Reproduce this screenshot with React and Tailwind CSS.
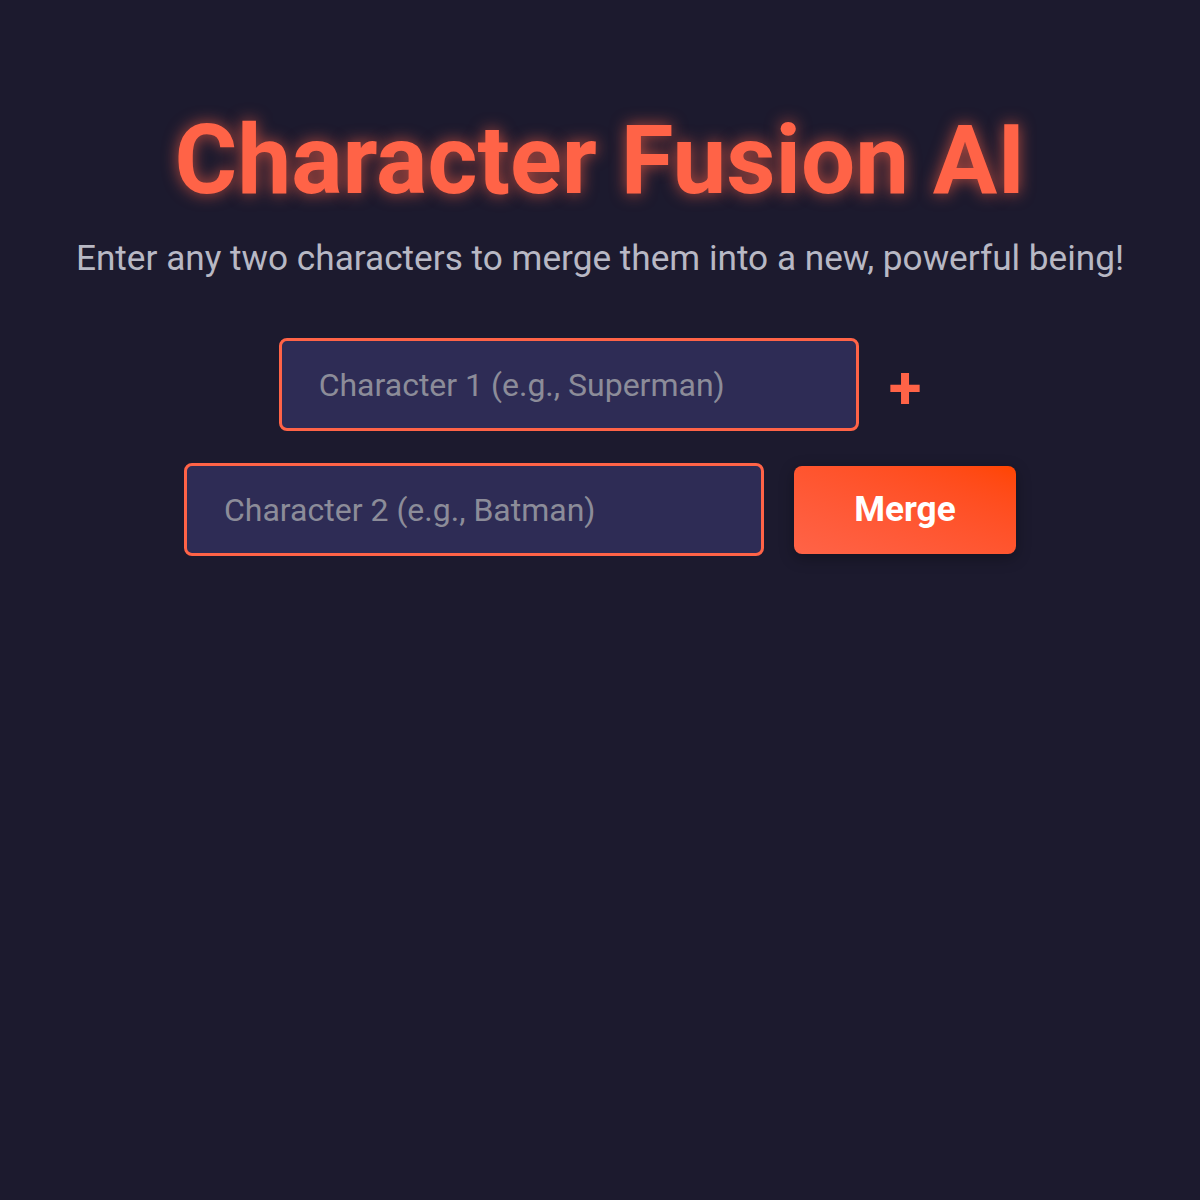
import React, { useState } from "react";

function App() {
  const [first, setFirst] = useState("");
  const [second, setSecond] = useState("");

  return (
    <div className="min-h-[1200px] w-full bg-[#1c1a2e] font-['Roboto',sans-serif] text-center">
      <div className="pt-[104px] px-5">
        <h1 className="text-[96px] leading-[112px] font-bold text-[#ff6347] [text-shadow:0_0_16px_rgba(255,99,71,0.7)]">
          Character Fusion AI
        </h1>
        <p className="mt-[21px] text-[35.2px] leading-[42px] text-[#b8b8c4]">
          Enter any two characters to merge them into a new, powerful being!
        </p>

        <div className="mt-[59px] flex flex-wrap justify-center items-center gap-x-[30px] gap-y-[32px] max-w-[900px] mx-auto">
          <input
            value={first}
            onChange={(e) => setFirst(e.target.value)}
            placeholder="Character 1 (e.g., Superman)"
            className="w-[580px] h-[93px] px-[37px] rounded-lg border-[3px] border-[#ff6347] bg-[#2e2c55] text-[32px] text-white placeholder:text-[#8c8c99] outline-none"
          />
          <span className="text-[60px] leading-none font-bold text-[#ff6347] translate-y-[3px]">+</span>
          <input
            value={second}
            onChange={(e) => setSecond(e.target.value)}
            placeholder="Character 2 (e.g., Batman)"
            className="w-[580px] h-[93px] px-[37px] rounded-lg border-[3px] border-[#ff6347] bg-[#2e2c55] text-[32px] text-white placeholder:text-[#8c8c99] outline-none"
          />
          <button className="w-[222px] h-[88px] rounded-lg bg-gradient-to-tr from-[#ff6347] to-[#ff4500] text-white text-[35.2px] font-bold shadow-[0_4px_15px_rgba(0,0,0,0.3)]">
            Merge
          </button>
        </div>
      </div>
    </div>
  );
}

export default App;
